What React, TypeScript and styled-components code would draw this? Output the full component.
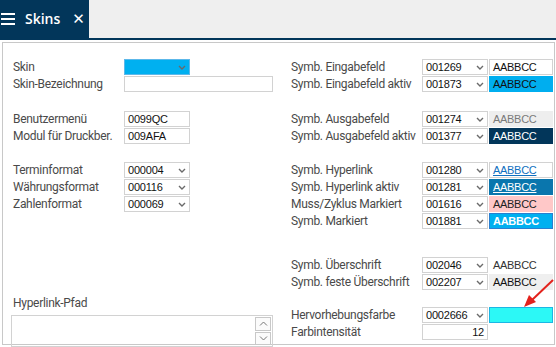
import styled, { createGlobalStyle } from "styled-components";

const GlobalStyle = createGlobalStyle`
  body {
    margin: 0;
    background: #ffffff;
    font-family: "Liberation Sans", Arial, sans-serif;
  }
`;

const NAVY = "#02365a";

type Swatch = {
  bg?: string;
  border?: string;
  color?: string;
  link?: boolean;
  bold?: boolean;
};

type SymbRow = {
  label: string;
  code: string;
  swatch: Swatch;
};

const Page = styled.div`
  width: 556px;
  height: 347px;
  position: relative;
  overflow: hidden;
`;

const Header = styled.header`
  display: flex;
  height: 38px;
  background: #efefef;
  border-bottom: 2px solid ${NAVY};
`;

const Tab = styled.div`
  display: flex;
  align-items: center;
  width: 89px;
  background: ${NAVY};
  color: #ffffff;
  padding-left: 1px;
  box-sizing: border-box;
`;

const Burger = styled.span`
  display: flex;
  flex-direction: column;
  gap: 3px;
  width: 14px;
  margin-right: 10px;

  i {
    display: block;
    height: 2px;
    background: #ffffff;
  }
`;

const Title = styled.span`
  font-family: "Open Sans", "Liberation Sans", sans-serif;
  font-size: 14px;
  font-weight: 600;
  margin-right: 12px;
  margin-top: -1px;
`;

const Close = styled.span`
  font-family: "DejaVu Sans", sans-serif;
  font-size: 15px;
  font-weight: bold;
  margin-top: -1px;
`;

const Panel = styled.main`
  display: flex;
  height: 303px;
  margin: 2px 1px 0 2px;
  padding: 16px 1px 1px 8px;
  border: 1px solid #c8c8c8;
  box-sizing: border-box;
`;

const Column = styled.div<{ $width?: number }>`
  display: flex;
  flex-direction: column;
  width: ${(p) => (p.$width ? `${p.$width}px` : "auto")};
  flex: ${(p) => (p.$width ? "none" : "1")};
`;

const Group = styled.div<{ $top?: number }>`
  display: flex;
  flex-direction: column;
  gap: 1px;
  margin-top: ${(p) => p.$top ?? 0}px;
`;

const Row = styled.div<{ $label: number }>`
  display: grid;
  grid-template-columns: ${(p) => p.$label}px 66px 1fr;
  height: 16px;
  align-items: center;
`;

const Label = styled.span<{ $pad?: number }>`
  font-family: Roboto, "Liberation Sans", sans-serif;
  font-size: 12px;
  letter-spacing: -0.3px;
  color: #4a4a4a;
  padding-left: ${(p) => p.$pad ?? 0}px;
  white-space: nowrap;
`;

const Field = styled.div<{ $bg?: string; $border?: string; $right?: boolean }>`
  display: flex;
  align-items: center;
  justify-content: ${(p) => (p.$right ? "flex-end" : "flex-start")};
  height: 16px;
  box-sizing: border-box;
  border: 1px solid ${(p) => p.$border ?? "#d2d2d2"};
  background: ${(p) => p.$bg ?? "#ffffff"};
  padding: 0 3px 0 3px;
  font-size: 11px;
  letter-spacing: -0.2px;
  color: #111;
`;

const Wide = styled(Field)`
  width: 149px;
`;

const Value = styled.span`
  flex: 1;
`;

const Chevron = () => (
  <svg width="8" height="5" viewBox="0 0 8 5">
    <path d="M1 1 L4 4 L7 1" fill="none" stroke="#6a6a6a" strokeWidth="1.4" />
  </svg>
);

const SwatchBox = styled.div<{ $s: Swatch }>`
  display: flex;
  align-items: center;
  height: 16px;
  box-sizing: border-box;
  border: 1px solid ${(p) => p.$s.border ?? "transparent"};
  background: ${(p) => p.$s.bg ?? "transparent"};
  color: ${(p) => p.$s.color ?? "#111"};
  font-size: 11px;
  letter-spacing: -0.3px;
  font-weight: ${(p) => (p.$s.bold ? "bold" : "normal")};
  text-decoration: ${(p) => (p.$s.link ? "underline" : "none")};
  padding-left: 3px;
  margin-left: 1px;
`;

const Memo = styled.div`
  display: flex;
  height: 32px;
  margin-top: 4px;
  width: 262px;
  border: 1px solid #d2d2d2;
  box-sizing: border-box;
  justify-content: flex-end;
  padding: 1px;
`;

const Spin = styled.div`
  display: flex;
  flex-direction: column;
  gap: 1px;
  width: 16px;
`;

const SpinButton = styled.div`
  flex: 1;
  display: flex;
  align-items: center;
  justify-content: center;
  border: 1px solid #c8c8c8;
  background: #fbfbfb;
`;

const Arrow = styled.svg`
  position: absolute;
  left: 520px;
  top: 276px;
`;

const select = (value: string) => (
  <Field>
    <Value>{value}</Value>
    <Chevron />
  </Field>
);

const symbGroups: { top: number; rows: SymbRow[] }[] = [
  {
    top: 0,
    rows: [
      { label: "Symb. Eingabefeld", code: "001269", swatch: { border: "#d2d2d2", bg: "#fff" } },
      { label: "Symb. Eingabefeld aktiv", code: "001873", swatch: { bg: "#00aeef" } },
    ],
  },
  {
    top: 19,
    rows: [
      { label: "Symb. Ausgabefeld", code: "001274", swatch: { bg: "#eeeeee", color: "#7a7a7a" } },
      { label: "Symb. Ausgabefeld aktiv", code: "001377", swatch: { bg: "#02365a", color: "#ffffff" } },
    ],
  },
  {
    top: 18,
    rows: [
      { label: "Symb. Hyperlink", code: "001280", swatch: { border: "#d2d2d2", color: "#1170c0", link: true } },
      { label: "Symb. Hyperlink aktiv", code: "001281", swatch: { bg: "#0a76ad", color: "#ffffff", link: true } },
      { label: "Muss/Zyklus Markiert", code: "001616", swatch: { bg: "#ffc8c8", color: "#222" } },
      { label: "Symb. Markiert", code: "001881", swatch: { bg: "#00b0f0", border: "#2a7fd0", color: "#ffffff", bold: true } },
    ],
  },
  {
    top: 28,
    rows: [
      { label: "Symb. Überschrift", code: "002046", swatch: { color: "#333" } },
      { label: "Symb. feste Überschrift", code: "002207", swatch: { bg: "#efefef", color: "#111" } },
    ],
  },
];

const App = () => {
  return (
    <Page>
      <GlobalStyle />
      <Header>
        <Tab>
          <Burger>
            <i />
            <i />
            <i />
          </Burger>
          <Title>Skins</Title>
          <Close>✕</Close>
        </Tab>
      </Header>

      <Panel>
        <Column $width={280}>
          <Group>
            <Row $label={113}>
              <Label $pad={2}>Skin</Label>
              <Field $bg="#00b0f0" $border="#5cb8ea">
                <Value />
                <Chevron />
              </Field>
            </Row>
            <Row $label={113}>
              <Label $pad={2}>Skin-Bezeichnung</Label>
              <Wide />
            </Row>
          </Group>

          <Group $top={19}>
            <Row $label={113}>
              <Label $pad={2}>Benutzermenü</Label>
              <Field>0099QC</Field>
            </Row>
            <Row $label={113}>
              <Label $pad={2}>Modul für Druckber.</Label>
              <Field>009AFA</Field>
            </Row>
          </Group>

          <Group $top={18}>
            <Row $label={113}>
              <Label $pad={2}>Terminformat</Label>
              {select("000004")}
            </Row>
            <Row $label={113}>
              <Label $pad={2}>Währungsformat</Label>
              {select("000116")}
            </Row>
            <Row $label={113}>
              <Label $pad={2}>Zahlenformat</Label>
              {select("000069")}
            </Row>
          </Group>

          <Group $top={84}>
            <Label $pad={2}>Hyperlink-Pfad</Label>
            <Memo>
              <Spin>
                <SpinButton>
                  <svg width="9" height="5" viewBox="0 0 9 5">
                    <path d="M1 4.5 L4.5 1 L8 4.5" fill="none" stroke="#777" strokeWidth="1" />
                  </svg>
                </SpinButton>
                <SpinButton>
                  <svg width="9" height="5" viewBox="0 0 9 5">
                    <path d="M1 0.5 L4.5 4 L8 0.5" fill="none" stroke="#777" strokeWidth="1" />
                  </svg>
                </SpinButton>
              </Spin>
            </Memo>
          </Group>
        </Column>

        <Column>
          {symbGroups.map((g) => (
            <Group key={g.rows[0].code} $top={g.top}>
              {g.rows.map((r) => (
                <Row key={r.code} $label={131}>
                  <Label>{r.label}</Label>
                  {select(r.code)}
                  <SwatchBox $s={r.swatch}>AABBCC</SwatchBox>
                </Row>
              ))}
            </Group>
          ))}

          <Group $top={17}>
            <Row $label={131}>
              <Label>Hervorhebungsfarbe</Label>
              {select("0002666")}
              <SwatchBox $s={{ bg: "#2cf8f6", border: "#1cb6e4" }} />
            </Row>
            <Row $label={131}>
              <Label>Farbintensität</Label>
              <Field $right>12</Field>
            </Row>
          </Group>
        </Column>
      </Panel>

      <Arrow width="36" height="36" viewBox="0 0 36 36">
        <line x1="33" y1="4" x2="12" y2="24" stroke="#e3221c" strokeWidth="2" />
        <polygon points="4,31 9,19 16,26" fill="#e3221c" />
      </Arrow>
    </Page>
  );
};

export default App;
